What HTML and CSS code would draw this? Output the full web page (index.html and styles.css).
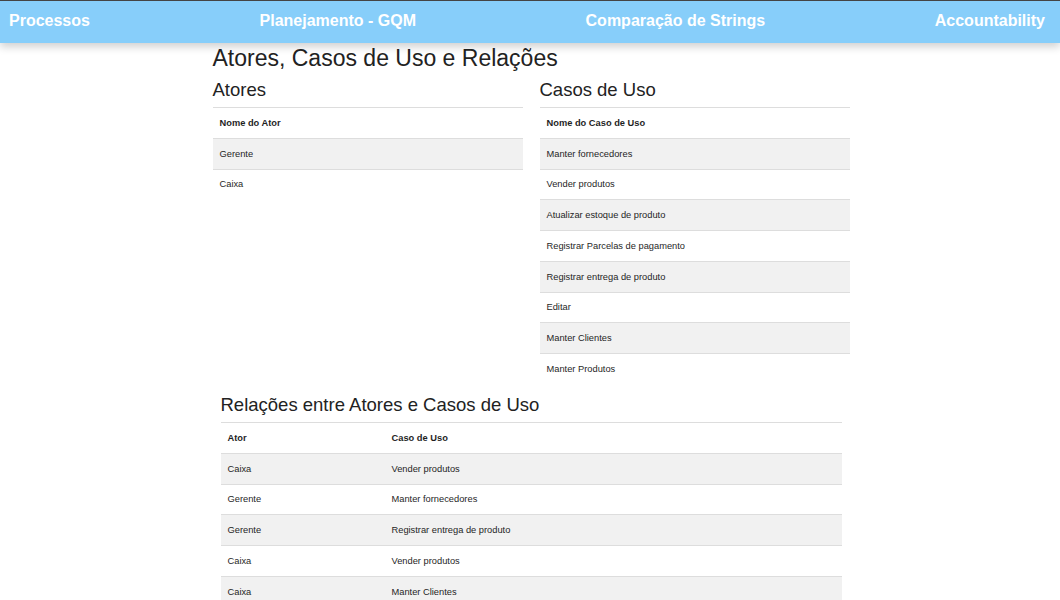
FILE: index.html
```html
<!DOCTYPE html>
<html lang="pt">
<head>
<meta charset="utf-8">
<title>Atores, Casos de Uso e Relações</title>
<link rel="stylesheet" href="styles.css">
</head>
<body>
<nav class="nav">
  <a class="nav-link">Processos</a>
  <a class="nav-link">Planejamento - GQM</a>
  <a class="nav-link">Comparação de Strings</a>
  <a class="nav-link">Accountability</a>
</nav>
<main class="container">
  <h1 class="page-title">Atores, Casos de Uso e Relações</h1>
  <div class="columns">
    <section class="col">
      <h2 class="sec-title">Atores</h2>
      <table class="tbl">
        <thead><tr><th>Nome do Ator</th></tr></thead>
        <tbody>
          <tr><td>Gerente</td></tr>
          <tr><td>Caixa</td></tr>
        </tbody>
      </table>
    </section>
    <section class="col">
      <h2 class="sec-title">Casos de Uso</h2>
      <div class="scroll">
        <table class="tbl">
          <thead><tr><th>Nome do Caso de Uso</th></tr></thead>
          <tbody>
            <tr><td>Manter fornecedores</td></tr>
            <tr><td>Vender produtos</td></tr>
            <tr><td>Atualizar estoque de produto</td></tr>
            <tr><td>Registrar Parcelas de pagamento</td></tr>
            <tr><td>Registrar entrega de produto</td></tr>
            <tr><td>Editar</td></tr>
            <tr><td>Manter Clientes</td></tr>
            <tr><td>Manter Produtos</td></tr>
          </tbody>
        </table>
      </div>
    </section>
  </div>
  <section class="relations">
    <h2 class="rel-title">Relações entre Atores e Casos de Uso</h2>
    <table class="tbl">
      <thead><tr><th class="c-ator">Ator</th><th>Caso de Uso</th></tr></thead>
      <tbody>
        <tr><td>Caixa</td><td>Vender produtos</td></tr>
        <tr><td>Gerente</td><td>Manter fornecedores</td></tr>
        <tr><td>Gerente</td><td>Registrar entrega de produto</td></tr>
        <tr><td>Caixa</td><td>Vender produtos</td></tr>
        <tr><td>Caixa</td><td>Manter Clientes</td></tr>
      </tbody>
    </table>
  </section>
</main>
</body>
</html>
```
FILE: styles.css
```css
html, body {
  margin: 0;
  padding: 0;
  background: #fff;
  font-family: "Liberation Sans", Arial, sans-serif;
  color: #222;
}
body {
  border-top: 1px solid #444;
}
.nav {
  display: flex;
  justify-content: space-between;
  align-items: center;
  height: 40px;
  padding: 0 15px 2px 9px;
  background: #87cefa;
  box-shadow: 0 4px 8px rgba(0, 0, 0, 0.18);
  position: relative;
  z-index: 1;
}
.nav-link {
  color: #fff;
  font-weight: bold;
  font-size: 16px;
  text-decoration: none;
}
.container {
  width: 637px;
  margin: 0 auto;
  padding-left: 2px;
}
.page-title {
  font-size: 23px;
  font-weight: normal;
  margin: 1px 0 0 0;
  line-height: 28px;
}
.sec-title {
  font-size: 18.5px;
  font-weight: normal;
  margin: 6px 0 0 0;
  line-height: 24px;
  padding-bottom: 5px;
}
.columns {
  display: grid;
  grid-template-columns: 310px 310px;
  column-gap: 17px;
  align-items: start;
}
.tbl {
  width: 100%;
  border-collapse: collapse;
  font-size: 9.3px;
}
.tbl th, .tbl td {
  text-align: left;
  padding: 0 7px;
  height: 29.75px;
  border-top: 1px solid #dddddd;
  color: #1f1f1f;
}
.tbl th { font-weight: bold; }
.tbl tbody tr:nth-child(odd) td { background: #f1f1f1; }
.scroll {
  height: 266px;
  overflow: hidden;
}
.relations {
  margin: 21px 8px 0 8px;
}
.rel-title {
  font-size: 18.5px;
  font-weight: normal;
  margin: 0;
  line-height: 22px;
  padding-bottom: 6px;
}
.c-ator { width: 150px; }
```
